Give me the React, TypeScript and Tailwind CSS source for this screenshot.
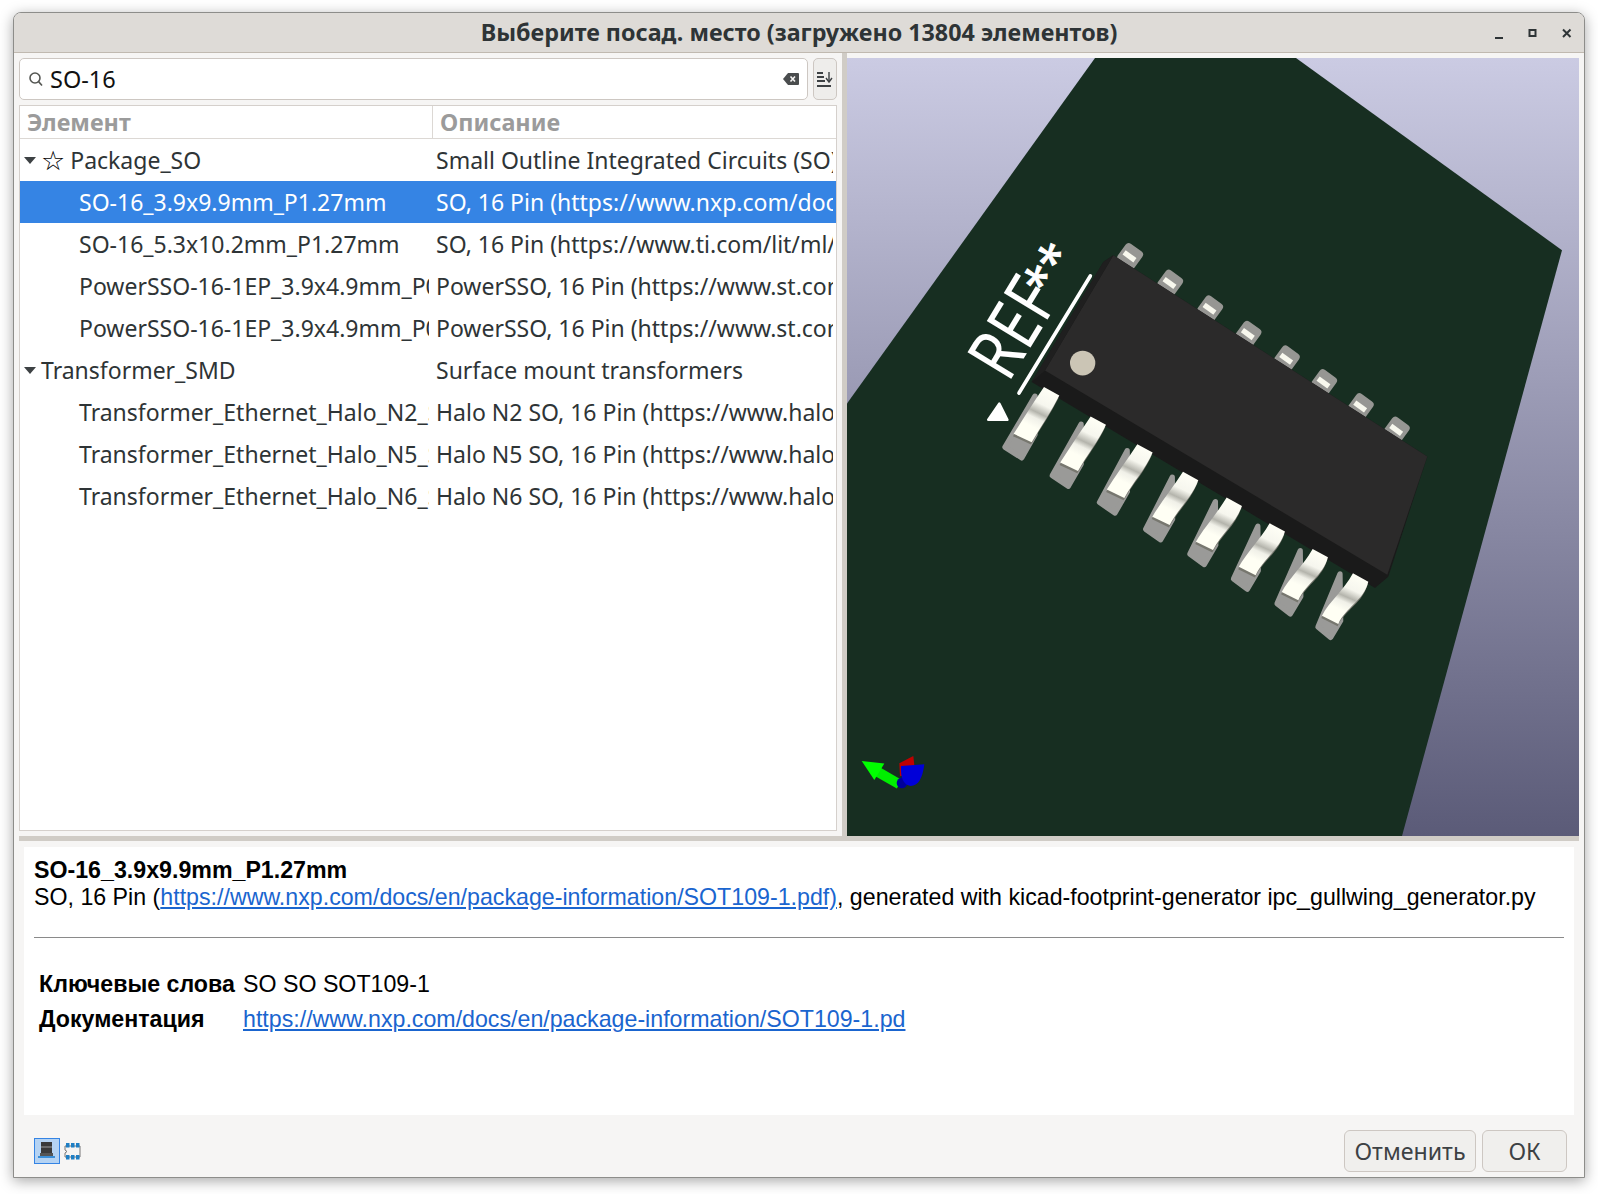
const uiFont = { fontFamily: '"Noto Sans", sans-serif' };

type Row = { name: string; desc: string; group?: boolean; star?: boolean; selected?: boolean };

const rows: Row[] = [
  { name: "Package_SO", desc: "Small Outline Integrated Circuits (SO)", group: true, star: true },
  { name: "SO-16_3.9x9.9mm_P1.27mm", desc: "SO, 16 Pin (https://www.nxp.com/docs/en/package-information/SOT109-1.pdf)", selected: true },
  { name: "SO-16_5.3x10.2mm_P1.27mm", desc: "SO, 16 Pin (https://www.ti.com/lit/ml/msop002a/msop002a.pdf)" },
  { name: "PowerSSO-16-1EP_3.9x4.9mm_P0.5mm", desc: "PowerSSO, 16 Pin (https://www.st.com/resource/en/datasheet)" },
  { name: "PowerSSO-16-1EP_3.9x4.9mm_P0.5mm", desc: "PowerSSO, 16 Pin (https://www.st.com/resource/en/datasheet)" },
  { name: "Transformer_SMD", desc: "Surface mount transformers", group: true },
  { name: "Transformer_Ethernet_Halo_N2_SO", desc: "Halo N2 SO, 16 Pin (https://www.haloelectronics.com/pdf)" },
  { name: "Transformer_Ethernet_Halo_N5_SO", desc: "Halo N5 SO, 16 Pin (https://www.haloelectronics.com/pdf)" },
  { name: "Transformer_Ethernet_Halo_N6_SO", desc: "Halo N6 SO, 16 Pin (https://www.haloelectronics.com/pdf)" },
];

const bottomPins = [
  [335, 512],
  [475, 600],
  [615, 683],
  [752, 766],
  [883, 843],
  [1012, 920],
  [1141, 997],
  [1262, 1070],
];

const topPins = [
  [570, 108],
  [690, 188],
  [810, 265],
  [925, 341],
  [1040, 415],
  [1152, 486],
  [1262, 558],
  [1370, 628],
];

const lerp = (a: number, b: number, k: number) => a + (b - a) * k;

const pinPath = (k: number) => {
  const p = (x1: number, y1: number, x2: number, y2: number) => `${lerp(x1, x2, k)} ${lerp(y1, y2, k)}`;
  return [
    "M-23 -12 L23 13",
    `C${p(-1, 60, 10, 70)} ${p(-31, 105, -46, 90)} ${p(-60, 153, -67, 140)}`,
    `L${p(-114, 128, -116, 115)}`,
    `C${p(-86, 85, -96, 75)} ${p(-56, 35, -51, 40)} -23 -12`,
    "Z",
  ].join(" ");
};

const padPoints = (k: number) =>
  [
    [lerp(-50, -62, k), lerp(15, -10, k)],
    [lerp(-140, -128, k), lerp(168, 149, k)],
    [lerp(-90, -90, k), lerp(200, 180, k)],
    [lerp(-50, -60, k), lerp(130, 130, k)],
  ]
    .map((pt) => pt.join(","))
    .join(" ");

const Preview = () => (
  <svg className="block w-full h-full" viewBox="847 58 732 777" preserveAspectRatio="none">
    <defs>
      <linearGradient id="bg" x1="0" y1="0" x2="0" y2="1">
        <stop offset="0" stopColor="#cbcbe3" />
        <stop offset="1" stopColor="#5b5b78" />
      </linearGradient>
      <linearGradient id="lead" x1="0.7" y1="0" x2="0.3" y2="1">
        <stop offset="0" stopColor="#fffff6" />
        <stop offset="0.3" stopColor="#f6f6ee" />
        <stop offset="0.46" stopColor="#b4b4ac" />
        <stop offset="0.56" stopColor="#f0f0e8" />
        <stop offset="0.72" stopColor="#fffff4" />
        <stop offset="1" stopColor="#fffff4" />
      </linearGradient>
    </defs>
    <rect x="847" y="58" width="732" height="777" fill="url(#bg)" />
    <polygon points="1095,58 1296,58 1562,250 1402,835 847,835 847,403" fill="#172e21" />

    <g transform="translate(940 220) scale(0.3333)">
      {topPins.map(([x, y]) => (
        <g key={x} transform={`translate(${x} ${y}) rotate(36)`}>
          <rect x="-31" y="-32" width="62" height="62" rx="12" fill="#969693" />
          <rect x="-21" y="-7" width="40" height="16" fill="#f8f8ee" />
        </g>
      ))}

      {bottomPins.map(([x, y], i) => (
        <polygon
          key={x}
          transform={`translate(${x} ${y})`}
          points={padPoints(i / 7)}
          fill="#9a9a98"
          stroke="#9a9a98"
          strokeWidth="16"
          strokeLinejoin="round"
        />
      ))}

      <polygon points="490,125 520,105 1462,708 1345,1068 1305,1102 275,485" fill="#1a1a1a" />
      <polygon points="520,105 1462,708 1342,1062 315,450" fill="#2b2a2a" />
      <polygon points="490,125 520,105 315,450 275,485" fill="#1f1f1f" />
      <ellipse cx="428" cy="428" rx="38" ry="37" fill="#cbc5b5" />

      {bottomPins.map(([x, y], i) => (
        <g key={x} transform={`translate(${x} ${y})`}>
          <path d={pinPath(i / 7)} fill="#77776f" transform="translate(-2 7)" />
          <path d={pinPath(i / 7)} fill="url(#lead)" />
        </g>
      ))}

      <line x1="237" y1="518" x2="451" y2="167" stroke="#ffffff" strokeWidth="11" strokeLinecap="round" />
      <polygon points="145,598 178,550 202,598" fill="#ffffff" stroke="#ffffff" strokeWidth="8" strokeLinejoin="round" />
      <g transform="translate(205 490) rotate(-58.6)" fontFamily='"Noto Sans", sans-serif' fill="#ffffff">
        <text fontSize="215" textLength="300" lengthAdjust="spacingAndGlyphs">
          REF
        </text>
        <text x="279" y="-20" fontSize="145" textLength="154" lengthAdjust="spacingAndGlyphs" stroke="#ffffff" strokeWidth="3">
          **
        </text>
      </g>
    </g>

    <g transform="translate(840 730) scale(0.3333)">
      <line x1="112" y1="122" x2="178" y2="160" stroke="#00ee00" strokeWidth="30" />
      <polygon points="65,90 133,98 103,147" fill="#00ff00" />
      <polygon points="178,97 220,75 226,130 180,135" fill="#c00000" />
      <circle cx="186" cy="156" r="16" fill="#00009a" />
      <path d="M183 105 L253 100 Q245 165 212 165 Q180 160 183 105 Z" fill="#0000d8" />
    </g>
  </svg>
);

const SearchIcon = () => (
  <svg width="18" height="18" viewBox="0 0 18 18" fill="none" stroke="#555753" strokeWidth="1.6">
    <circle cx="8" cy="8" r="5" />
    <line x1="11.6" y1="11.6" x2="15" y2="15.5" />
  </svg>
);

const ClearIcon = () => (
  <svg width="18" height="14" viewBox="0 0 18 14">
    <path d="M6 1 H16 Q17 1 17 2 V12 Q17 13 16 13 H6 L1 7 Z" fill="#4a4d4e" />
    <path d="M8.5 4.5 L13 9.5 M13 4.5 L8.5 9.5" stroke="#f6f5f4" strokeWidth="1.6" />
  </svg>
);

const SortIcon = () => (
  <svg width="18" height="18" viewBox="0 0 18 18" stroke="#3d4144" strokeWidth="1.8" fill="none">
    <line x1="1" y1="3" x2="7" y2="3" />
    <line x1="1" y1="7" x2="8" y2="7" />
    <line x1="1" y1="11" x2="9" y2="11" />
    <line x1="1" y1="16" x2="15" y2="16" />
    <line x1="13" y1="2" x2="13" y2="11" strokeWidth="1.4" />
    <path d="M10 8 L13 12 L16 8" strokeWidth="1.4" />
  </svg>
);

const FootprintIcon3D = () => (
  <svg width="18" height="20" viewBox="0 0 18 20">
    <rect x="3" y="1" width="11" height="11" fill="#3a3a3a" />
    <rect x="3" y="5" width="11" height="2" fill="#6b6b6b" />
    <rect x="2" y="12" width="13" height="3" fill="#555555" />
    <rect x="0" y="15" width="17" height="2" fill="#3b8fd8" />
  </svg>
);

const FootprintIcon = () => (
  <svg width="18" height="18" viewBox="0 0 18 18">
    <path d="M1 4 H16 V15 H1 V11 L3 9.5 L1 8 Z" fill="none" stroke="#777777" strokeWidth="1" />
    {[2, 7, 12].map((x) => (
      <g key={x}>
        <rect x={x} y="1" width="3.5" height="4.5" fill="#1f7fc4" />
        <rect x={x} y="13" width="3.5" height="4.5" fill="#1f7fc4" />
      </g>
    ))}
  </svg>
);

const Caret = () => (
  <svg width="12" height="7" viewBox="0 0 12 7" className="shrink-0">
    <polygon points="0,0 12,0 6,7" fill="#3d4144" />
  </svg>
);

const FootprintRow = ({ name, desc, group, star, selected }: Row) => (
  <div className={`flex h-[42px] items-center text-[23px] ${selected ? "bg-[#3584e4] text-white" : "text-[#2e3436]"}`}>
    <div className="w-[413px] shrink-0 pr-[4px]">
      <div className="overflow-hidden">
        {group ? (
          <div className="flex items-center pl-[4px] whitespace-nowrap">
            <Caret />
            {star && <span className="ml-[5px] mr-[5px] text-[27px] leading-none text-black" style={{ fontFamily: '"DejaVu Sans", sans-serif' }}>☆</span>}
            {!star && <span className="w-[5px]" />}
            <span>{name}</span>
          </div>
        ) : (
          <div className="pl-[59px] whitespace-nowrap">{name}</div>
        )}
      </div>
    </div>
    <div className="flex-1 min-w-0 pl-[3px] pr-[3px]">
      <div className="overflow-hidden whitespace-nowrap">{desc}</div>
    </div>
  </div>
);

export default function App() {
  return (
    <div className="w-[1598px] h-[1194px] bg-white pt-[12px] pl-[13px] overflow-hidden" style={uiFont}>
      <div className="w-[1572px] h-[1166px] flex flex-col bg-[#f6f5f4] border border-[#8d8d8a] rounded-t-[8px] shadow-[0_3px_14px_rgba(0,0,0,0.35)] overflow-hidden">
        <div className="h-[40px] shrink-0 relative flex items-center justify-center bg-[#dedbd7] border-b border-[#c0b9b0]">
          <span className="text-[23.3px] font-bold text-[#2e3436] leading-none">
            Выберите посад. место (загружено 13804 элементов)
          </span>
          <div className="absolute right-[12px] top-[15px] flex items-center gap-[24px]">
            <svg width="10" height="12" viewBox="0 0 10 12"><rect x="1" y="9" width="8" height="2" fill="#2e3436" /></svg>
            <svg width="10" height="12" viewBox="0 0 10 12"><rect x="1.5" y="2" width="6" height="6" fill="none" stroke="#2e3436" strokeWidth="2" /></svg>
            <svg width="10" height="12" viewBox="0 0 10 12"><path d="M1 1.5 L8.5 9 M8.5 1.5 L1 9" stroke="#2e3436" strokeWidth="2" /></svg>
          </div>
        </div>

        <div className="flex h-[783px] shrink-0">
          <div className="w-[828px] shrink-0 pl-[5px] pr-[5px] pt-[5px] flex flex-col">
            <div className="flex h-[42px] shrink-0 gap-[5px]">
              <div className="flex-1 flex items-center bg-white border border-[#cdc7c2] rounded-[5px] pl-[7px] pr-[7px]">
                <SearchIcon />
                <span className="ml-[5px] flex-1 pt-[1px] text-[23.5px] text-[#111111]">SO-16</span>
                <ClearIcon />
              </div>
              <div className="w-[24px] flex items-center justify-center bg-[#eeedeb] border border-[#cdc7c2] rounded-[5px]">
                <SortIcon />
              </div>
            </div>
            <div className="mt-[5px] h-[726px] bg-white border border-[#d5d0cc] overflow-hidden">
              <div className="flex h-[33px] border-b border-[#dcd8d4] text-[23.4px] font-bold text-[#9b9b9b] leading-none">
                <div className="w-[413px] shrink-0 flex items-center pl-[7px] pt-[2px] border-r border-[#dcd8d4]">Элемент</div>
                <div className="flex-1 flex items-center pl-[7px] pt-[2px]">Описание</div>
              </div>
              <div>
                {rows.map((row, i) => (
                  <FootprintRow key={i} {...row} />
                ))}
              </div>
            </div>
          </div>
          <div className="w-[5px] shrink-0 bg-[#d0ccc6]" />
          <div className="w-[732px] shrink-0 pt-[5px]">
            <Preview />
          </div>
        </div>

        <div className="h-[5px] shrink-0 mx-[5px] bg-[#d0ccc6]" />

        <div
          className="mx-[10px] mt-[6px] h-[268px] shrink-0 bg-white pl-[10px] pr-[10px] pt-[10px] text-[23.2px] leading-[27px] text-black"
          style={{ fontFamily: '"Liberation Sans", sans-serif' }}
        >
          <div className="font-bold">SO-16_3.9x9.9mm_P1.27mm</div>
          <div className="whitespace-nowrap">
            SO, 16 Pin (
            <span className="text-[#1a65cf] underline">https://www.nxp.com/docs/en/package-information/SOT109-1.pdf)</span>
            , generated with kicad-footprint-generator ipc_gullwing_generator.py
          </div>
          <div className="mt-[26px] h-px bg-[#8a8a8a]" />
          <div className="mt-[33px] pl-[5px] flex flex-col gap-[8px]">
            <div className="flex">
              <div className="w-[204px] shrink-0 font-bold">Ключевые слова</div>
              <div>SO SO SOT109-1</div>
            </div>
            <div className="flex">
              <div className="w-[204px] shrink-0 font-bold">Документация</div>
              <div className="text-[#1a65cf] underline">https://www.nxp.com/docs/en/package-information/SOT109-1.pd</div>
            </div>
          </div>
        </div>

        <div className="flex-1 flex items-center justify-between pt-[9px] pl-[20px] pr-[17px]">
          <div className="flex items-center gap-[4px]">
            <div className="w-[26px] h-[26px] flex items-center justify-center bg-[#b5d3f3] border border-[#3584e4]">
              <FootprintIcon3D />
            </div>
            <FootprintIcon />
          </div>
          <div className="flex gap-[6px] text-[23.2px] text-[#3d4144]">
            <div className="w-[132px] h-[42px] pt-[1px] flex items-center justify-center bg-[#f0efed] border border-[#cdc7c2] rounded-[6px]">Отменить</div>
            <div className="w-[85px] h-[42px] pt-[1px] flex items-center justify-center bg-[#f0efed] border border-[#cdc7c2] rounded-[6px]">ОК</div>
          </div>
        </div>
      </div>
    </div>
  );
}
